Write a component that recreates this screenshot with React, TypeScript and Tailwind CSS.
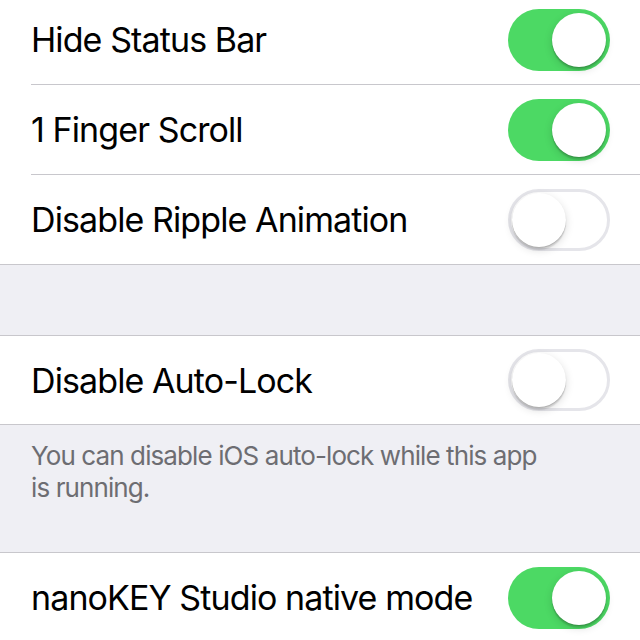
const font = { fontFamily: "Inter, 'Liberation Sans', sans-serif" };

function Toggle({ on }: { on: boolean }) {
  return (
    <div
      className={
        on
          ? "relative h-[62px] w-[102px] shrink-0 rounded-full bg-[#4cd964]"
          : "relative h-[62px] w-[102px] shrink-0 rounded-full border-[3px] border-[#e5e5ea] bg-white"
      }
    >
      <div
        className={
          on
            ? "absolute right-[4px] top-[4px] h-[54px] w-[54px] rounded-full bg-white shadow-[0_3px_8px_rgba(0,0,0,0.15),0_1px_1px_rgba(0,0,0,0.16),0_3px_1px_rgba(0,0,0,0.1)]"
            : "absolute left-[1px] top-[1px] h-[54px] w-[54px] rounded-full bg-white shadow-[0_3px_8px_rgba(0,0,0,0.15),0_1px_1px_rgba(0,0,0,0.16),0_3px_1px_rgba(0,0,0,0.1)]"
        }
      />
    </div>
  );
}

function Row({ label, on, last, short }: { label: string; on: boolean; last?: boolean; short?: boolean }) {
  let cls = "flex h-[90px] items-center justify-between pr-[30px] border-b border-[#c8c7cc]";
  if (last) cls = "flex h-[89px] items-center justify-between pr-[30px]";
  if (short) cls = "flex h-[88px] items-center justify-between pr-[30px]";
  return (
    <div className="pl-[31px] bg-white">
      <div className={cls}>
        <span className="text-[34px] tracking-[-0.9px] text-black">{label}</span>
        <Toggle on={on} />
      </div>
    </div>
  );
}

export default function App() {
  return (
    <div className="h-[640px] w-[640px] overflow-hidden bg-[#efeff4]" style={font}>
      <div className="-mt-[5px] border-b border-[#c8c7cc]">
        <Row label="Hide Status Bar" on />
        <Row label="1 Finger Scroll" on />
        <Row label="Disable Ripple Animation" on={false} last />
      </div>
      <div className="h-[70px]" />
      <div className="border-y border-[#c8c7cc]">
        <Row label="Disable Auto-Lock" on={false} short />
      </div>
      <div className="h-[127px] pl-[31px] pr-[90px] pt-[15px] text-[26px] leading-[32px] tracking-[-0.9px] text-[#6d6d72]">
        You can disable iOS auto-lock while this app is running.
      </div>
      <div className="border-t border-[#c8c7cc]">
        <Row label="nanoKEY Studio native mode" on />
      </div>
    </div>
  );
}
